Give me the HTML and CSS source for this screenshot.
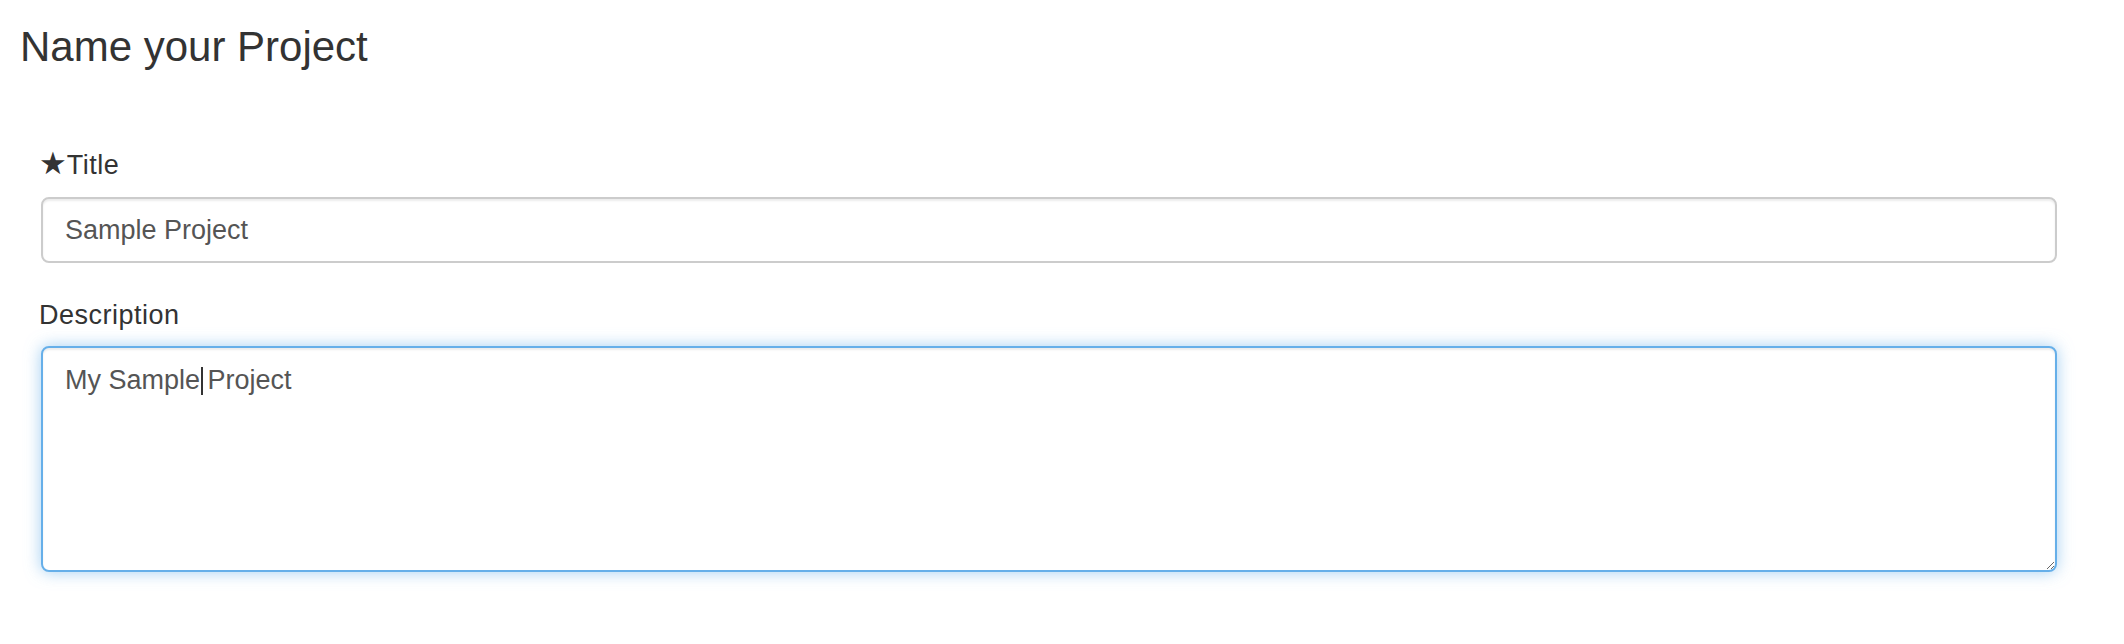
FILE: index.html
```html
<!DOCTYPE html>
<html lang="en">
<head>
  <meta charset="UTF-8" />
  <meta name="viewport" content="width=device-width, initial-scale=1.0"/>
  <title>Name your Project</title>
  <link rel="stylesheet" href="styles.css">
</head>
<body>
  <h1 class="page-title">Name your Project</h1>

  <form class="project-form">
    <div class="form-group">
      <label for="title"><span class="required">★</span>Title</label>
      <input type="text" id="title" class="form-control" value="Sample Project">
    </div>

    <div class="form-group">
      <label for="description">Description</label>
      <div class="field-wrap">
        <textarea id="description" class="form-control focused" rows="5">My Sample Project</textarea>
        <span class="caret"></span>
      </div>
    </div>
  </form>
</body>
</html>
```

FILE: styles.css
```css
body {
  margin: 0;
  background: #fff;
  font-family: "Liberation Sans", Arial, sans-serif;
  color: #333;
}
.page-title {
  margin: 24px 0 0;
  padding-left: 20px;
  font-size: 42px;
  line-height: 46px;
  font-weight: 400;
  color: #333;
}
.project-form {
  padding: 0 67px 0 41px;
  margin-top: 80px;
}
.form-group {
  margin-bottom: 37px;
}
label {
  display: block;
  font-size: 27px;
  line-height: 30px;
  letter-spacing: 0.5px;
  margin-bottom: 16px;
  margin-left: -2px;
}
.form-group:first-child label {
  margin-bottom: 17px;
}
.required {
  font-family: "DejaVu Sans", sans-serif;
  font-size: 31px;
  line-height: 0;
  letter-spacing: 0;
}
.form-control {
  display: block;
  width: 100%;
  box-sizing: border-box;
  border: 2px solid #ccc;
  border-radius: 8px;
  box-shadow: inset 0 2px 2px rgba(0, 0, 0, 0.075);
  font-family: "Liberation Sans", Arial, sans-serif;
  font-size: 27px;
  color: #555;
  padding: 0 22px;
  margin: 0;
  background: #fff;
  outline: none;
}
input.form-control {
  height: 66px;
}
textarea.form-control {
  height: 226px;
  padding-top: 14px;
  line-height: 36px;
  resize: vertical;
  caret-color: transparent;
}
.focused {
  border-color: #66afe9;
  box-shadow: inset 0 2px 2px rgba(0, 0, 0, 0.075), 0 0 16px rgba(102, 175, 233, 0.6);
}
.field-wrap {
  position: relative;
}
.caret {
  position: absolute;
  left: 160px;
  top: 21px;
  width: 2px;
  height: 28px;
  background: #333;
}
```
